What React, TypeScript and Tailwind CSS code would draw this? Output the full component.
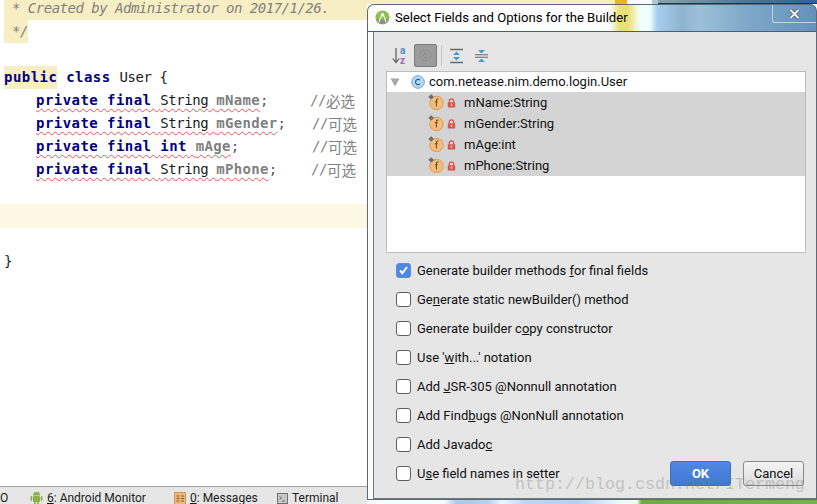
const mono = { fontFamily: '"DejaVu Sans Mono", monospace' };
const ui = { fontFamily: 'Roboto, sans-serif' };

function Kw({ children }: { children: React.ReactNode }) {
  return <span className="font-bold text-[#000080] tracking-[0.45px]">{children}</span>;
}
function Reg({ children }: { children: React.ReactNode }) {
  return <span className="text-[#1a1a1a] tracking-[-0.43px]">{children}</span>;
}

function FieldLine({ type, typeKw, name, comment, cls }: { type: string; typeKw?: boolean; name: string; comment: string; cls: string }) {
  return (
    <div className="flex h-[23px] items-center whitespace-pre pl-[36px]">
      <span className={cls}>
        <span className="underline decoration-wavy decoration-[#f05050] decoration-1 underline-offset-[3px] [text-decoration-skip-ink:none]">
          <Kw>private final </Kw>
          {typeKw ? <Kw>{type} </Kw> : <Reg>{type} </Reg>}
          <span className="font-bold text-[#808080] tracking-[0.3px]">{name}</span>
        </span>
        <span className="text-[#555] tracking-[-0.43px]">;</span>
      </span>
      <span className="text-[#808080] tracking-[-0.43px]">//</span>
      <span className="text-[14.5px] text-[#808080] [font-family:'Noto_Sans_CJK_SC',sans-serif]">{comment}</span>
    </div>
  );
}

function Editor() {
  return (
    <div className="relative flex min-h-0 flex-1 flex-col overflow-hidden bg-white text-[14px]" style={mono}>
      <div className="ml-[4px] flex h-[20px] items-end whitespace-pre bg-[#f7eec4] pb-[1px] pl-[8px] italic text-[#808080] tracking-[-0.5px]">
        * Created by Administrator on 2017/1/26.
      </div>
      <div className="ml-[4px] flex h-[23px] w-[24px] items-center whitespace-pre bg-[#f7eec4] pl-[8px] italic text-[#808080] tracking-[-0.43px]">*/</div>
      <div className="h-[23px]" />
      <div className="flex h-[23px] items-center whitespace-pre pl-[4px]">
        <span className="flex h-[23px] items-center bg-[#f7eec4]"><span className="font-bold text-[#000080] tracking-[0.45px]">public</span></span>
        <Kw> class </Kw>
        <Reg>User {"{"}</Reg>
      </div>
      <FieldLine type="String" name="mName" comment="必选" cls="w-[274px]" />
      <FieldLine type="String" name="mGender" comment="可选" cls="w-[276px]" />
      <FieldLine type="int" typeKw name="mAge" comment="可选" cls="w-[276px]" />
      <FieldLine type="String" name="mPhone" comment="可选" cls="w-[275px]" />
      <div className="h-[23px]" />
      <div className="h-[24px] bg-[#fcf8e4]" />
      <div className="h-[22px]" />
      <div className="flex h-[23px] items-center pl-[4px]"><Reg>{"}"}</Reg></div>
    </div>
  );
}

function AndroidBug() {
  return (
    <svg width="13" height="14" viewBox="0 0 13 14">
      <path d="M3 4.5a3.5 3.5 0 0 1 7 0z" fill="#8cb04a" />
      <rect x="3" y="5" width="7" height="6" rx="1" fill="#8cb04a" />
      <rect x="0.5" y="5" width="1.8" height="5" rx="0.9" fill="#8cb04a" />
      <rect x="10.7" y="5" width="1.8" height="5" rx="0.9" fill="#8cb04a" />
      <rect x="4" y="10.5" width="1.8" height="3.5" rx="0.9" fill="#8cb04a" />
      <rect x="7.2" y="10.5" width="1.8" height="3.5" rx="0.9" fill="#8cb04a" />
      <path d="M4 1L5 2.5M9 1L8 2.5" stroke="#8cb04a" strokeWidth="0.8" />
    </svg>
  );
}

function BottomBar() {
  return (
    <div className="flex h-[18px] shrink-0 items-center overflow-hidden border-t border-[#a0a0a0] bg-[#e6e6e6] pt-[5px] text-[12px] text-[#1c1c1c]" style={ui}>
      <span className="w-[30px] shrink-0">O</span>
      <span className="w-[17px] shrink-0"><AndroidBug /></span>
      <span className="w-[127px] shrink-0 whitespace-nowrap"><u>6</u>: Android Monitor</span>
      <span className="w-[16px] shrink-0">
        <svg width="12" height="13" viewBox="0 0 12 13">
          <rect x="0.5" y="0.5" width="11" height="12" fill="#f0b878" stroke="#d09858" />
          <path d="M2.5 4h3M7 4h3M2.5 6.5h3M7 6.5h3M2.5 9h3M7 9h3" stroke="#80582c" strokeWidth="1" />
        </svg>
      </span>
      <span className="w-[87px] shrink-0 whitespace-nowrap"><u>0</u>: Messages</span>
      <span className="w-[15px] shrink-0">
        <svg width="11" height="11" viewBox="0 0 11 11">
          <rect x="0.5" y="0.5" width="10" height="10" fill="#c8c8c8" stroke="#707070" />
          <path d="M2.5 3.5l2 1.5-2 1.5M5 8h3" stroke="#505050" strokeWidth="0.8" fill="none" />
        </svg>
      </span>
      <span className="whitespace-nowrap">Terminal</span>
    </div>
  );
}

function FieldIcon() {
  return (
    <svg width="16" height="16" viewBox="0 0 16 16">
      <circle cx="8.5" cy="9" r="6.7" fill="#f5bd7c" stroke="#e29a48" />
      <path d="M10.5 5.2c-1.4-.5-2.1.1-2.1 1.3v6M6.8 7.8h3" stroke="#6a5132" strokeWidth="1.1" fill="none" />
      <path d="M0.3 2.8L3.4 0.2L6 3.2L3 5.6z" fill="#6e6e6e" />
    </svg>
  );
}

function LockIcon() {
  return (
    <svg width="9" height="10" viewBox="0 0 9 10">
      <path d="M2.3 4.5V3a2.2 2.2 0 0 1 4.4 0v1.5" stroke="#d9534f" strokeWidth="1.2" fill="none" />
      <rect x="0.8" y="4.3" width="7.4" height="5.2" rx="0.4" fill="#d9534f" />
      <rect x="3.8" y="5.6" width="1.4" height="2.2" fill="#f4d0cc" />
    </svg>
  );
}

function FieldRow({ label }: { label: string }) {
  return (
    <div className="flex h-[21px] items-center bg-[#d4d4d4] pl-[41px]">
      <span className="-mt-[1px] w-[19px] shrink-0"><FieldIcon /></span>
      <span className="w-[17px] shrink-0"><LockIcon /></span>
      <span>{label}</span>
    </div>
  );
}

function Toolbar() {
  return (
    <div className="ml-[18px] flex h-[23px] items-center">
      <span className="w-[22px] shrink-0">
        <svg width="16" height="19" viewBox="0 0 16 19">
          <path d="M4 2v14M0.8 12.5L4 16.5L7.2 12.5" stroke="#5a5a5a" strokeWidth="1.2" fill="none" />
          <text x="8" y="8" fontSize="10" fontWeight="700" fill="#4a90c8" fontFamily="Roboto">a</text>
          <text x="8" y="17.5" fontSize="10" fontWeight="700" fill="#9a70b8" fontFamily="Roboto">z</text>
        </svg>
      </span>
      <span className="flex h-[23px] w-[23px] shrink-0 items-center justify-center rounded-[2px] border border-[#7c7c7c] bg-[#9c9c9c]">
        <svg width="13" height="13" viewBox="0 0 13 13">
          <circle cx="6.5" cy="6.5" r="5.5" fill="none" stroke="#8c8c8c" />
          <path d="M8.3 5a2.2 2.2 0 1 0 0 3" stroke="#868686" fill="none" />
        </svg>
      </span>
      <span className="ml-[4px] h-[21px] w-px shrink-0 bg-[#c8c8c8]" />
      <span className="ml-[7px] w-[25px] shrink-0">
        <svg width="15" height="16" viewBox="0 0 15 16">
          <path d="M1 1.5h13M1 14.5h13" stroke="#6a6a6a" strokeWidth="1.4" />
          <path d="M7.5 3.5L11 7H4zM7.5 12.5L4 9h7z" fill="#4a9ad0" />
        </svg>
      </span>
      <span className="w-[15px] shrink-0">
        <svg width="15" height="16" viewBox="0 0 15 16">
          <path d="M1 6.8h13M1 9.2h13" stroke="#6a6a6a" strokeWidth="1.1" />
          <path d="M7.5 5.5L4 2h7zM7.5 10.5L11 14H4z" fill="#4a9ad0" />
        </svg>
      </span>
    </div>
  );
}

function Check({ checked }: { checked?: boolean }) {
  return checked ? (
    <span className="flex h-[15px] w-[15px] shrink-0 items-center justify-center rounded-[3px] border border-[#5a8ddc] bg-[#4f88e0]">
      <svg width="11" height="11" viewBox="0 0 11 11"><path d="M2 5.5l2.4 2.6L9 2" stroke="#fff" strokeWidth="2" fill="none" /></svg>
    </span>
  ) : (
    <span className="h-[15px] w-[15px] shrink-0 rounded-[3px] border border-[#5e5e5e] bg-white" />
  );
}

function Option({ checked, children }: { checked?: boolean; children: React.ReactNode }) {
  return (
    <div className="flex h-[29px] items-center gap-[6px] whitespace-pre pl-[22px]">
      <Check checked={checked} />
      <span>{children}</span>
    </div>
  );
}

function Dialog() {
  return (
    <div className="flex min-h-0 flex-1 flex-col rounded-t-[7px] border border-b-0 border-[#5c6a78] bg-[linear-gradient(90deg,#fdfdfd_0%,#fdfdfd_54%,#e9e27e_56%,#e8e070_58%,#f6f6d8_60%,#f2ffff_61%,#eaffff_63%,#a8cfee_64.5%,#8eb4d0_70%,#9cc0d8_74%,#7ea8c8_85%,#6492bc_100%)]" style={ui}>
      <div className="flex h-[27px] shrink-0 border-b border-[#40607c]">
        <span className="ml-[7px] mt-[5px] h-[15px] w-[20px] shrink-0">
          <svg width="15" height="15" viewBox="0 0 15 15">
            <circle cx="7.5" cy="7.5" r="7" fill="#8cc152" />
            <path d="M1 9.5h13a7 7 0 0 1-13 0z" fill="#8a8f8a" />
            <path d="M4 12L6.5 5M11 12L8.5 5" stroke="#f4f4f4" strokeWidth="1.1" />
            <circle cx="7.5" cy="4.8" r="1.7" fill="#f4f4f4" />
          </svg>
        </span>
        <span className="mt-[3px] whitespace-nowrap text-[13.1px] leading-[20px] text-black">Select Fields and Options for the Builder</span>
        <span className="ml-auto flex h-[18px] w-[44px] items-center justify-center rounded-bl-[3px] border-b border-l border-[#c0d4e4]">
          <svg width="11" height="10" viewBox="0 0 11 10">
            <path d="M1.5 1L9.5 9M9.5 1L1.5 9" stroke="#404858" strokeWidth="3.4" />
            <path d="M1.5 1L9.5 9M9.5 1L1.5 9" stroke="#f0f0f0" strokeWidth="2.2" />
          </svg>
        </span>
      </div>
      <div className="ml-[5px] flex min-h-0 flex-1 flex-col border border-t-0 border-r-0 border-[#6a7a80] bg-[#e6e6e6] pt-[12px] text-[13px] text-[#111]">
        <Toolbar />
        <div className="ml-[12px] mr-[10px] mt-[4px] h-[182px] shrink-0 border border-[#bcbcbc] bg-white">
          <div className="flex h-[20px] items-center">
            <svg className="ml-[3px] mr-[11px]" width="10" height="9" viewBox="0 0 10 9"><path d="M0.5 0.5h9L5 8.5z" fill="#a8a8a8" /></svg>
            <svg className="mr-[4px]" width="14" height="14" viewBox="0 0 14 14">
              <circle cx="7" cy="7" r="6.3" fill="#b4d8f4" stroke="#6aa8e0" />
              <path d="M9 5.2a2.6 2.6 0 1 0 0 3.6" stroke="#2c5a88" strokeWidth="1.1" fill="none" />
            </svg>
            <span>com.netease.nim.demo.login.User</span>
          </div>
          <FieldRow label="mName:String" />
          <FieldRow label="mGender:String" />
          <FieldRow label="mAge:int" />
          <FieldRow label="mPhone:String" />
        </div>
        <div className="mt-[3px]">
          <Option checked>Generate builder methods <u>f</u>or final fields</Option>
          <Option>Ge<u>n</u>erate static newBuilder() method</Option>
          <Option>Generate builder c<u>o</u>py constructor</Option>
          <Option>Use '<u>w</u>ith...' notation</Option>
          <Option>Add <u>J</u>SR-305 @Nonnull annotation</Option>
          <Option>Add Find<u>b</u>ugs @NonNull annotation</Option>
          <Option>Add Javado<u>c</u></Option>
          <div className="flex items-center justify-between pr-[12px]">
            <Option>U<u>s</u>e field names in setter</Option>
            <div className="flex gap-[12px]">
              <button className="h-[25px] w-[61px] rounded-[3px] border border-[#3f6fc0] bg-[linear-gradient(#5088e4,#4078d4)] text-[13px] font-bold text-white">OK</button>
              <button className="h-[25px] w-[61px] rounded-[3px] border border-[#8a8a8a] bg-[linear-gradient(#f4f4f4,#dcdcdc)] text-[13px] text-[#111]">Cancel</button>
            </div>
          </div>
        </div>
      </div>
      <div className="-mx-px h-[5px] shrink-0 border-t border-[#5c6a78] bg-[linear-gradient(90deg,#f4fcff_0%,#f4fcff_17%,#b0c8e8_20%,#b8d0ec_27%,#eef8ff_30%,#c0d4f0_35%,#b8d0ec_47%,#eef8ff_56%,#f0fff0_60%,#70a850_61%,#78b058_100%)]" />
    </div>
  );
}

function TopStrip() {
  return (
    <div className="flex h-[4px] shrink-0">
      <div className="w-[248px] bg-[#f7eec4]" />
      <div className="w-[12px] bg-[#e8b80c]" />
      <div className="w-[25px] bg-[#fbfbfb]" />
      <div className="w-[6px] bg-[#a8c8dc]" />
      <div className="flex-1 border-b border-[#203848] bg-[linear-gradient(90deg,#8aa4a8,#4c7c9c_50%,#2c6498)]" />
    </div>
  );
}

export default function App() {
  return (
    <div className="relative flex h-[504px] w-[817px] overflow-hidden bg-white">
      <div className="flex h-full w-[367px] shrink-0 flex-col">
        <Editor />
        <BottomBar />
      </div>
      <div className="flex h-full min-w-0 flex-1 flex-col">
        <TopStrip />
        <Dialog />
      </div>
      <div className="pointer-events-none absolute left-[515px] top-[474px] whitespace-nowrap text-[16.67px] leading-[22px] text-[#808080] opacity-35 [font-family:'Liberation_Mono',monospace]">
        http://blog.csdn.net/ITermeng
      </div>
    </div>
  );
}
